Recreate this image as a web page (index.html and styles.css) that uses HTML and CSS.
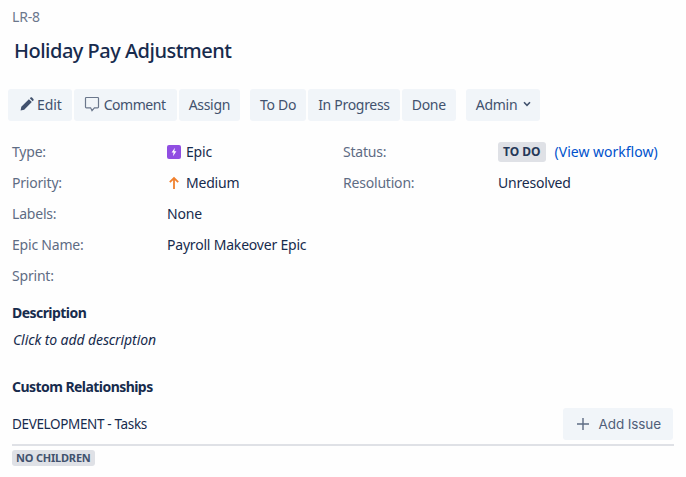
FILE: index.html
```html
<!DOCTYPE html>
<html lang="en">

<head>
    <meta charset="UTF-8">
    <meta name="viewport" content="width=device-width, initial-scale=1.0">
    <title>LR-8 Holiday Pay Adjustment</title>
    <link rel="stylesheet" href="styles.css">
</head>

<body>
    <div class="issue-key">LR-8</div>
    <h1 class="issue-title">Holiday Pay Adjustment</h1>

    <div class="toolbar">
        <div class="group">
            <a class="btn btn-edit">
                <svg class="icon" width="14" height="14" viewBox="0 0 14 14"><path d="M0.6 13.4 1.3 9.8 8.9 2.2 11.8 5.1 4.2 12.7ZM9.8 1.3 10.6 0.6C11 0.2 11.6 0.2 12 0.6L13.4 2C13.8 2.4 13.8 3 13.4 3.4L12.7 4.2Z" fill="#42526e"/></svg>
                Edit
            </a>
            <a class="btn btn-comment">
                <svg class="icon" width="16" height="16" viewBox="0 0 16 16"><path d="M2.3 1.5H13.7C14.2 1.5 14.5 1.8 14.5 2.3V11C14.5 11.5 14.2 11.8 13.7 11.8H10.4L8 14.6 6.6 11.8H2.3C1.8 11.8 1.5 11.5 1.5 11V2.3C1.5 1.8 1.8 1.5 2.3 1.5Z" fill="none" stroke="#6b778c" stroke-width="1.2"/></svg>
                Comment
            </a>
            <a class="btn">Assign</a>
        </div>
        <div class="group">
            <a class="btn">To Do</a>
            <a class="btn">In Progress</a>
            <a class="btn">Done</a>
        </div>
        <div class="group">
            <a class="btn btn-admin">
                Admin
                <svg class="chevron" width="8" height="6" viewBox="0 0 8 6"><path d="M1 1.3 4 4.3 7 1.3" fill="none" stroke="#42526e" stroke-width="1.6"/></svg>
            </a>
        </div>
    </div>

    <div class="details">
        <div class="label">Type:</div>
        <div class="value">
            <svg class="type-icon" width="14" height="14" viewBox="0 0 14 14"><rect width="14" height="14" rx="2" fill="#904ee2"/><path d="M7.9 2.8 4.6 7.6H6.6L6 11.2 9.4 6.3H7.3Z" fill="#fff"/></svg>
            Epic
        </div>
        <div class="label">Status:</div>
        <div class="value"><span class="lozenge">TO DO</span><a class="link">(View workflow)</a></div>

        <div class="label">Priority:</div>
        <div class="value">
            <svg class="type-icon" width="14" height="14" viewBox="0 0 14 14"><path d="M7 13V2M2.8 6.2 7 2 11.2 6.2" fill="none" stroke="#f0802d" stroke-width="1.8"/></svg>
            Medium
        </div>
        <div class="label">Resolution:</div>
        <div class="value">Unresolved</div>

        <div class="label">Labels:</div>
        <div class="value wide">None</div>

        <div class="label">Epic Name:</div>
        <div class="value wide">Payroll Makeover Epic</div>

        <div class="label">Sprint:</div>
        <div class="value wide"></div>
    </div>

    <h2 class="section-title">Description</h2>
    <div class="placeholder">Click to add description</div>

    <h2 class="section-title relationships">Custom Relationships</h2>
    <div class="rel-head">
        <span>DEVELOPMENT - Tasks</span>
        <a class="btn add-issue">
            <svg width="14" height="14" viewBox="0 0 14 14"><path d="M1 7H13M7 1V13" fill="none" stroke="#5e6c84" stroke-width="1.4"/></svg>
            Add Issue
        </a>
    </div>
    <div class="rel-body">
        <span class="lozenge small">NO CHILDREN</span>
    </div>
</body>

</html>
```

FILE: styles.css
```css
* {
    box-sizing: border-box;
}

body {
    margin: 0;
    padding: 8px 12px 0 12px;
    background-color: #fefefe;
    color: #172b4d;
    font-family: "Noto Sans", sans-serif;
    font-size: 14px;
    letter-spacing: -0.2px;
}

.issue-key {
    height: 18px;
    line-height: 18px;
    font-size: 14px;
    color: #6b778c;
}

.issue-title {
    margin: 11px 0 0 2px;
    height: 28px;
    line-height: 28px;
    font-size: 20px;
    font-weight: 500;
    color: #172b4d;
    letter-spacing: -0.5px;
}

.toolbar {
    display: flex;
    gap: 10px;
    margin: 24px 0 0 -4px;
}

.group {
    display: flex;
    gap: 2px;
}

.btn {
    display: flex;
    align-items: center;
    gap: 4px;
    height: 32px;
    padding: 0 10px 2px;
    border-radius: 3px;
    background-color: #f1f5f9;
    color: #42526e;
    white-space: nowrap;
    letter-spacing: -0.3px;
}

.btn .icon {
    flex: none;
}

.btn-edit {
    gap: 3px;
    padding: 0 10px 2px 12px;
    letter-spacing: -0.1px;
}

.btn-comment {
    padding-right: 11px;
    letter-spacing: -0.45px;
}

.btn-admin {
    gap: 6px;
    padding: 0 9px 2px 10px;
    letter-spacing: -0.3px;
}

.details {
    display: grid;
    grid-template-columns: 155px 176px 155px 1fr;
    grid-auto-rows: 31px;
    margin-top: 15px;
    line-height: 31px;
}

.label {
    color: #5e6c84;
}

.value {
    display: flex;
    align-items: center;
    gap: 5px;
}

.wide {
    grid-column: 2 / 5;
}

.lozenge {
    display: inline-block;
    height: 20px;
    line-height: 20px;
    padding: 0 5px;
    border-radius: 3px;
    background-color: #dfe1e6;
    color: #253858;
    font-size: 12px;
    font-weight: 700;
    letter-spacing: 0;
}

.link {
    margin-left: 4px;
    color: #0052cc;
    letter-spacing: 0;
}

.section-title {
    margin: 0;
    height: 18px;
    line-height: 18px;
    font-size: 14px;
    font-weight: 700;
    color: #172b4d;
    letter-spacing: -0.55px;
}

.details + .section-title {
    margin-top: 13px;
}

.placeholder {
    margin: 9px 0 0 1px;
    height: 18px;
    line-height: 18px;
    font-style: italic;
    letter-spacing: -0.1px;
}

.relationships {
    margin-top: 29px;
}

.rel-head {
    display: flex;
    justify-content: space-between;
    align-items: center;
    margin-top: 12px;
    height: 32px;
    font-size: 13.5px;
    letter-spacing: -0.35px;
}

.add-issue {
    gap: 9px;
    margin-right: 1px;
    padding: 0 12px 0 13px;
    font-family: "Inter", sans-serif;
    font-size: 13.5px;
    letter-spacing: -0.1px;
    color: #505f79;
}

.rel-body {
    margin-top: 4px;
    border-top: 2px solid #dfe1e6;
    padding-top: 4px;
}

.lozenge.small {
    display: block;
    width: max-content;
    height: 16px;
    line-height: 15px;
    padding: 0 4px;
    font-size: 11px;
    letter-spacing: -0.2px;
    color: #42526e;
}
```
